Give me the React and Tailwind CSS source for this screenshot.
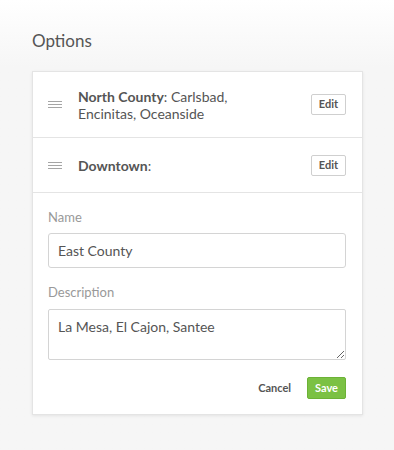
export default function App() {
  return (
    <div
      className="w-[394px] h-[450px] bg-linear-to-b from-white to-[#f6f6f6] to-[15%] px-8 pt-[30px] text-[#555]"
      style={{ fontFamily: 'Lato, "Open Sans", sans-serif' }}
    >
      <h1 className="text-[17px] leading-[22px] text-[#555] mb-[19px]">Options</h1>

      <div className="w-[331px] bg-white border border-[#e4e4e4] shadow-[0_1px_3px_rgba(0,0,0,0.08)]">
        {/* Option rows */}
        <div className="h-[66px] flex items-center pl-[15px] pr-[16px] border-b border-[#e4e4e4]">
          <Handle />
          <p className="ml-4 w-[205px] text-[14px] leading-[17px]">
            <span className="font-bold">North County</span>: Carlsbad, Encinitas, Oceanside
          </p>
          <EditButton />
        </div>
        <div className="h-[55px] flex items-center pl-[15px] pr-[16px] border-b border-[#e4e4e4]">
          <Handle />
          <p className="ml-4 w-[205px] text-[14px] leading-[17px]">
            <span className="font-bold">Downtown</span>:
          </p>
          <EditButton />
        </div>

        {/* Edit form */}
        <div className="px-[15px] pt-[15px] pb-[15px]">
          <label className="block text-[13px] leading-[18px] text-[#999] mb-[7px]">Name</label>
          <input
            defaultValue="East County"
            className="block w-[298px] h-[35px] border border-[#d4d4d4] rounded-[3px] px-[9px] text-[14px] text-[#555] outline-none"
          />
          <label className="block text-[13px] leading-[18px] text-[#999] mt-[15px] mb-[8px]">Description</label>
          <textarea
            defaultValue="La Mesa, El Cajon, Santee"
            className="block w-[298px] h-[51px] border border-[#d4d4d4] rounded-[2px] px-[9px] pt-[8px] text-[14px] leading-[18px] text-[#555] outline-none"
          />
          <div className="flex justify-end items-center mt-[17px] pr-px gap-4">
            <button className="text-[11px] font-bold text-[#555]">Cancel</button>
            <button className="h-[22px] w-[39px] rounded-[2px] bg-[#7bc144] border border-[#6cb236] text-white text-[11px] font-bold">
              Save
            </button>
          </div>
        </div>
      </div>
    </div>
  )
}

function Handle() {
  return (
    <div className="w-[14px] flex flex-col gap-[2px] shrink-0">
      <div className="h-px bg-[#a5a5a5]" />
      <div className="h-px bg-[#a5a5a5]" />
      <div className="h-px bg-[#a5a5a5]" />
    </div>
  )
}

function EditButton() {
  return (
    <button className="ml-auto h-[21px] w-[35px] border border-[#cfcfcf] rounded-[2px] bg-white text-[11px] font-bold text-[#555]">
      Edit
    </button>
  )
}
